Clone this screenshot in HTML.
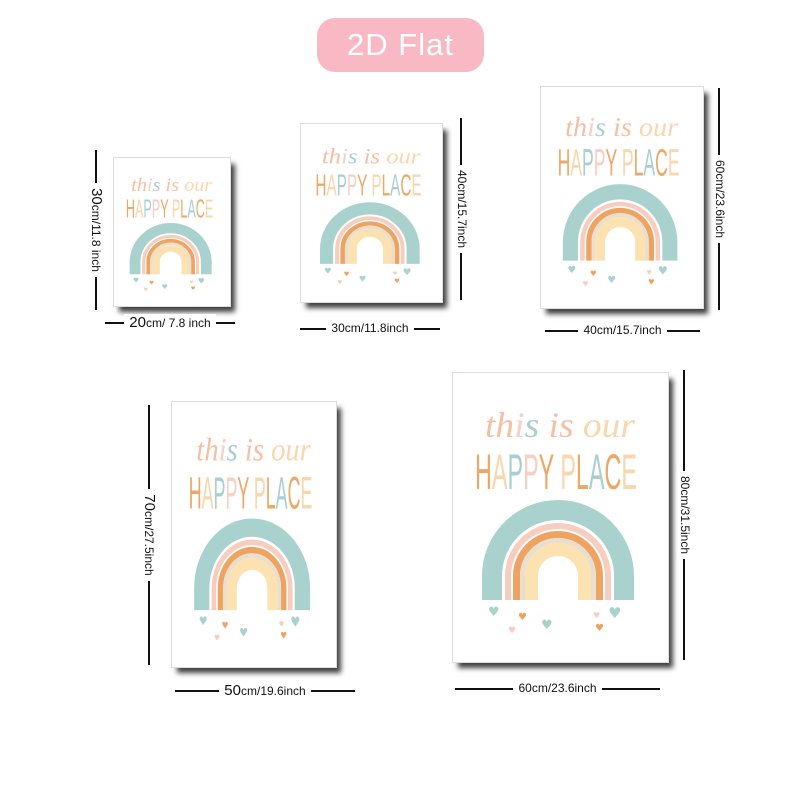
<!DOCTYPE html>
<html><head><meta charset="utf-8"><style>
body{margin:0;width:800px;height:800px;background:#fff;position:relative;overflow:hidden;font-family:"Liberation Sans",sans-serif}
.badge{position:absolute;left:317px;top:18px;width:167px;height:54px;border-radius:18px;background:#f8b9c5;color:#fff;font-size:31px;text-align:center;line-height:54px;letter-spacing:1px}
.p{position:absolute;background:#fff;box-shadow:5px 6px 5px rgba(0,0,0,.75);outline:1px solid #ddd}
.p svg{width:100%;height:100%;display:block}
.lab{position:absolute;height:16px;display:flex;align-items:center;justify-content:center;font-size:12px;color:#111;white-space:nowrap}
.lab::before{content:"";position:absolute;left:0;right:0;top:8px;border-top:2px solid #111}
.lab span{position:relative;background:#fff;padding:0 5px}
.lab b{font-weight:normal;font-size:15px}
.v{transform:rotate(90deg);transform-origin:center}
</style></head><body>
<div class="badge">2D Flat</div>

<div class="p" style="left:114px;top:158px;width:116px;height:148px"><svg viewBox="0 0 215 289" preserveAspectRatio="none">
<g id="poster">
<text x="107" y="64" text-anchor="middle" font-family="Liberation Serif,serif" font-style="italic" font-size="36" textLength="150" lengthAdjust="spacingAndGlyphs"><tspan fill="#f3c0a3">th</tspan><tspan fill="#f6d0c4">i</tspan><tspan fill="#a9cfd0">s</tspan><tspan fill="#f3c0a3"> is </tspan><tspan fill="#f8d7ad">our</tspan></text>
<text x="103" y="116" text-anchor="middle" font-family="Liberation Sans Narrow,Liberation Sans,sans-serif" font-size="50" textLength="162" lengthAdjust="spacingAndGlyphs"><tspan fill="#eda865">H</tspan><tspan fill="#f8d7ad">A</tspan><tspan fill="#a9cfd0">P</tspan><tspan fill="#f6cfc5">P</tspan><tspan fill="#eda865">Y </tspan><tspan fill="#f8d7ad">P</tspan><tspan fill="#eda865">L</tspan><tspan fill="#a9cfd0">A</tspan><tspan fill="#eda865">C</tspan><tspan fill="#f8d7ad">E</tspan></text>
<g fill="none">
<path d="M39 227V203A66 66 0 0 1 171 203V227" stroke="#a9d2cf" stroke-width="20"/>
<path d="M55 227V203A50 50 0 0 1 155 203V227" stroke="#f7cdbf" stroke-width="6"/>
<path d="M63.5 227V203A41.5 41.5 0 0 1 146.5 203V227" stroke="#eea460" stroke-width="7"/>
<path d="M69.5 227V203A35.5 35.5 0 0 1 140.5 203V227" stroke="#e8dfcf" stroke-width="5"/>
<path d="M78.5 227V203A26.5 26.5 0 0 1 131.5 203V227" stroke="#fbe2b0" stroke-width="13"/>
</g>
<g font-size="13" font-family="DejaVu Sans,sans-serif">
<text x="35" y="243" fill="#a9d2cf">♥</text><text x="65" y="247" fill="#eea460" font-size="10">♥</text>
<text x="88" y="256" fill="#a9d2cf">♥</text><text x="55" y="260" fill="#f7cdbf" font-size="9">♥</text>
<text x="140" y="245" fill="#f7cdbf" font-size="8">♥</text><text x="155" y="245" fill="#a9d2cf" font-size="15">♥</text>
<text x="142" y="258" fill="#eea460" font-size="10">♥</text></g>
</g></svg></div>

<div class="p" style="left:301px;top:124px;width:141px;height:178px"><svg viewBox="0 0 215 289" preserveAspectRatio="none"><use href="#poster"/></svg></div>
<div class="p" style="left:541px;top:87px;width:162px;height:221px"><svg viewBox="0 0 215 289" preserveAspectRatio="none"><use href="#poster"/></svg></div>
<div class="p" style="left:172px;top:402px;width:164px;height:265px"><svg viewBox="0 0 215 289" preserveAspectRatio="none"><use href="#poster"/></svg></div>
<div class="p" style="left:453px;top:373px;width:215px;height:289px"><svg viewBox="0 0 215 289" preserveAspectRatio="none"><use href="#poster"/></svg></div>

<div class="lab" style="left:105px;top:314px;width:130px"><span><b>20</b>cm/ 7.8 inch</span></div>
<div class="lab" style="left:300px;top:320px;width:140px"><span>30cm/11.8inch</span></div>
<div class="lab" style="left:545px;top:322px;width:155px"><span>40cm/15.7inch</span></div>
<div class="lab" style="left:175px;top:682px;width:180px"><span><b>50</b>cm/19.6inch</span></div>
<div class="lab" style="left:455px;top:680px;width:205px"><span>60cm/23.6inch</span></div>

<div class="lab v" style="left:17px;top:222px;width:160px"><span><b>30</b>cm/11.8 inch</span></div>
<div class="lab v" style="left:371px;top:201px;width:182px"><span>40cm/15.7inch</span></div>
<div class="lab v" style="left:609px;top:191px;width:222px"><span>60cm/23.6inch</span></div>
<div class="lab v" style="left:20px;top:527px;width:260px"><span><b>70</b>cm/27.5inch</span></div>
<div class="lab v" style="left:540px;top:507px;width:290px"><span>80cm/31.5inch</span></div>
</body></html>
